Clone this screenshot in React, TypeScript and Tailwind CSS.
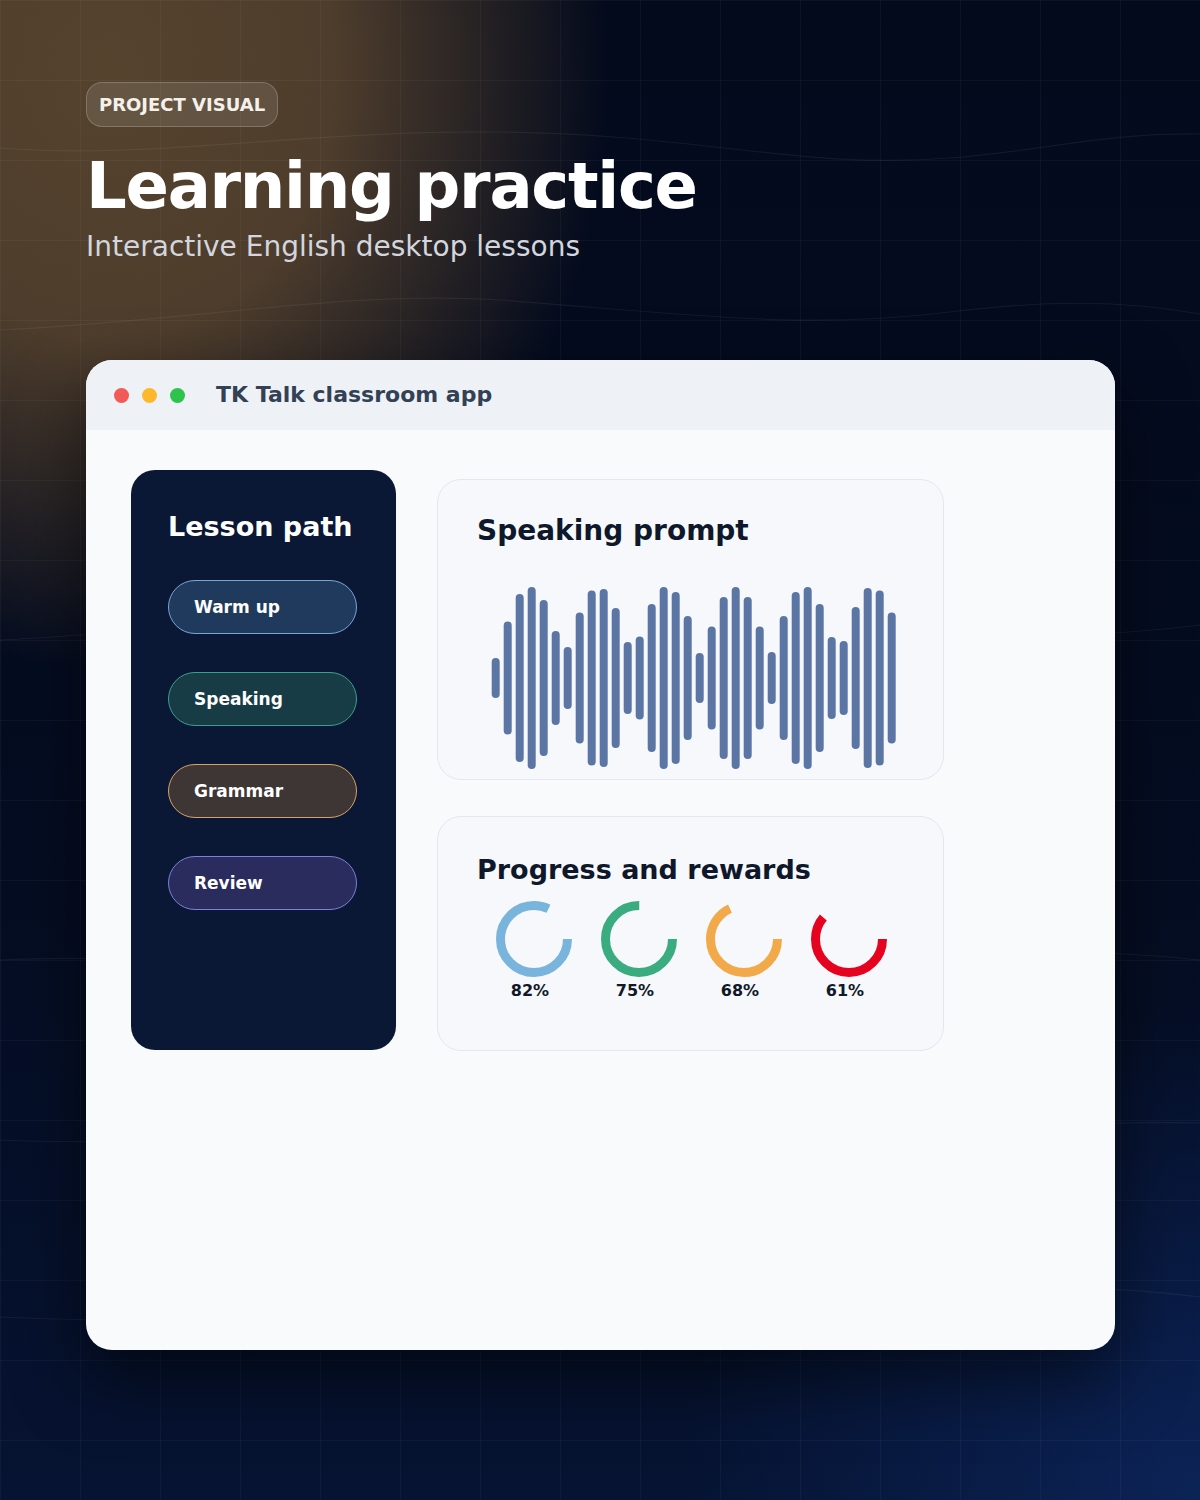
import React from "react";

const WAVE = [40, 113, 168, 182, 156, 94, 62, 131, 175, 178, 140, 72, 83, 148, 182, 172, 124, 50, 103, 162, 182, 162, 103, 52, 124, 172, 182, 148, 82, 74, 142, 180, 175, 131];

const RINGS = [
  { p: 82, color: "#78b4dc" },
  { p: 75, color: "#3bab80" },
  { p: 68, color: "#f1a94a" },
  { p: 61, color: "#e5031f" },
];

const PILLS = [
  { label: "Warm up", cls: "bg-[#203a5e] border-[#7aa5d4]" },
  { label: "Speaking", cls: "bg-[#173c45] border-[#3aa08e]" },
  { label: "Grammar", cls: "bg-[#3d3634] border-[#d9a263]" },
  { label: "Review", cls: "bg-[#2a2c5e] border-[#7d80d8]" },
];

function Ring({ p, color }: { p: number; color: string }) {
  const r = 33.5;
  const c = 2 * Math.PI * r;
  return (
    <svg width="76" height="76" viewBox="0 0 76 76" className="ml-[8px] block">
      <circle
        cx="38"
        cy="38"
        r={r}
        fill="none"
        stroke={color}
        strokeWidth="9"
        strokeDasharray={`${(p / 100) * c} ${c}`}
      />
    </svg>
  );
}

export default function App() {
  return (
    <div className="relative w-[1200px] h-[1500px] overflow-hidden font-['DejaVu_Sans',sans-serif] bg-[radial-gradient(ellipse_500px_600px_at_110px_70px,#55432e_0%,#4e3d2c_45%,transparent_100%),radial-gradient(ellipse_700px_650px_at_100%_100%,#0c2356_0%,transparent_75%),linear-gradient(180deg,#030a1c_0%,#050d22_60%,#061332_100%)]">
      <div className="absolute inset-0 bg-[linear-gradient(rgba(255,255,255,0.035)_1px,transparent_1px),linear-gradient(90deg,rgba(255,255,255,0.035)_1px,transparent_1px)] bg-[size:80px_80px]" />
      <svg className="absolute inset-0" width="1200" height="1500" viewBox="0 0 1200 1500" fill="none">
        <g stroke="rgba(255,255,255,0.06)" strokeWidth="1.2">
          <path d="M0 148 C150 160 300 130 500 132 C700 134 800 170 950 158 C1050 150 1100 133 1200 134" />
          <path d="M0 330 C200 320 350 290 500 300 C700 315 800 330 950 312 C1050 300 1120 300 1200 314" />
          <path d="M0 640 C200 630 400 600 600 615 C800 630 1000 650 1200 625" />
          <path d="M0 960 C200 950 400 990 600 970 C800 950 1000 940 1200 960" />
          <path d="M0 1140 C250 1150 450 1110 700 1125 C900 1135 1050 1120 1200 1123" />
          <path d="M0 1317 C300 1330 600 1300 900 1290 C1050 1285 1120 1287 1200 1297" />
        </g>
      </svg>

      <div className="relative pl-[86px] pt-[82px]">
        <div className="inline-flex h-[45px] items-center rounded-[16px] border border-white/20 bg-white/10 px-[12px] text-[18px] font-bold leading-none text-[#f5f1ea]">
          PROJECT VISUAL
        </div>
        <h1 className="mt-[27px] text-[64px] font-bold leading-none tracking-[-0.02em] text-white">
          Learning practice
        </h1>
        <p className="mt-[15px] text-[28px] leading-none text-[#d3d6de]">Interactive English desktop lessons</p>

        <div className="mt-[99px] w-[1029px] h-[990px] overflow-hidden rounded-[26px] bg-[#f8fafc] shadow-[0_30px_70px_rgba(0,0,0,0.55)]">
          <div className="flex h-[70px] items-center bg-[#eef2f7] pl-[28px]">
            <div className="flex gap-[13px]">
              <span className="h-[15px] w-[15px] rounded-full bg-[#f25a57]" />
              <span className="h-[15px] w-[15px] rounded-full bg-[#fdb82c]" />
              <span className="h-[15px] w-[15px] rounded-full bg-[#2ec34b]" />
            </div>
            <span className="ml-[31px] text-[22px] font-bold leading-none text-[#334155]">TK Talk classroom app</span>
          </div>

          <div className="flex pl-[45px] pt-[40px]">
            <div className="h-[580px] w-[265px] rounded-[24px] bg-[#0a1835] pl-[37px] pt-[43px]">
              <div className="text-[27px] font-bold leading-none text-white">Lesson path</div>
              <div className="mt-[40px] flex flex-col gap-[38px]">
                {PILLS.map((p) => (
                  <div
                    key={p.label}
                    className={`flex h-[54px] w-[189px] items-center rounded-full border pl-[25px] text-[17px] font-bold leading-none text-white ${p.cls}`}
                  >
                    {p.label}
                  </div>
                ))}
              </div>
            </div>

            <div className="ml-[41px] mt-[9px] flex w-[507px] flex-col gap-[36px]">
              <div className="h-[301px] rounded-[24px] border border-[#e3e8f0] bg-[#f6f8fb] pl-[39px] pt-[37px]">
                <div className="text-[28px] font-bold leading-none text-[#0f172a]">Speaking prompt</div>
                <svg width="427" height="190" viewBox="0 0 427 190" className="mt-[38px] block">
                  {WAVE.map((h, i) => (
                    <rect key={i} x={14.7 + i * 12} y={95 - h / 2} width="8" height={h} rx="4" fill="#5b76a4" />
                  ))}
                </svg>
              </div>

              <div className="h-[235px] rounded-[24px] border border-[#e3e8f0] bg-[#f6f8fb] pl-[39px] pt-[39px]">
                <div className="text-[27px] font-bold leading-none text-[#0f172a]">Progress and rewards</div>
                <div className="mt-[18px] ml-[11px] flex gap-[21px]">
                  {RINGS.map((r) => (
                    <div key={r.p} className="flex w-[84px] flex-col items-center">
                      <Ring p={r.p} color={r.color} />
                      <div className="mt-[6px] text-[16px] font-bold leading-none text-[#111827]">{r.p}%</div>
                    </div>
                  ))}
                </div>
              </div>
            </div>
          </div>
        </div>
      </div>
    </div>
  );
}
